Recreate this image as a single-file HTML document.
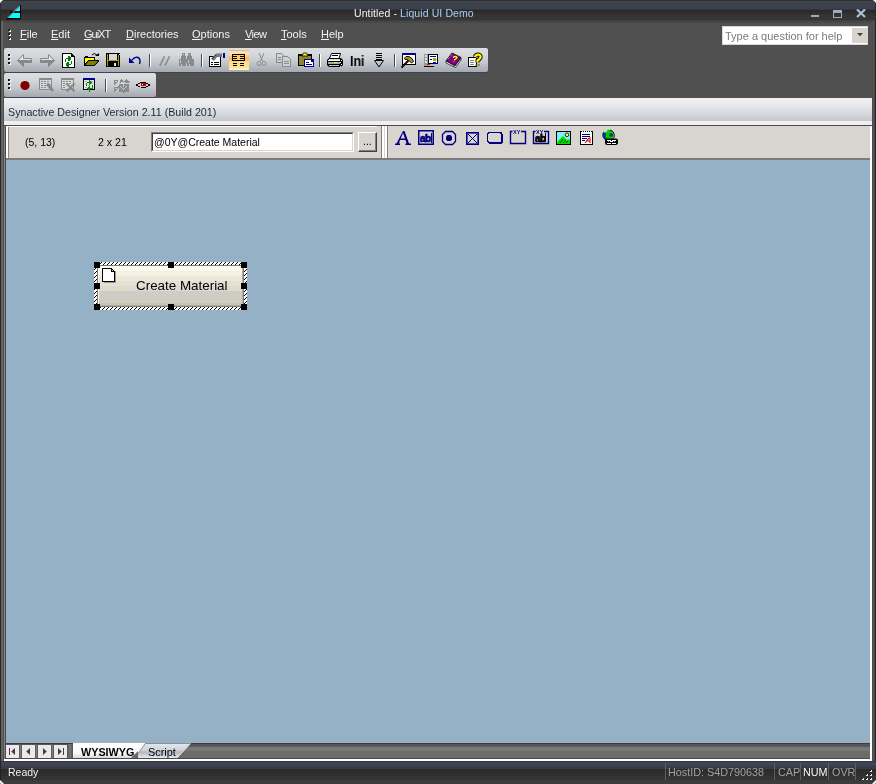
<!DOCTYPE html>
<html><head><meta charset="utf-8">
<style>
*{margin:0;padding:0;box-sizing:border-box}
html,body{width:876px;height:784px;overflow:hidden;background:#fff}
body{position:relative;font-family:"Liberation Sans",sans-serif;font-size:11px;line-height:12px}
.a{position:absolute}
.t{position:absolute;white-space:nowrap;line-height:12px;will-change:transform}
#win{left:0;top:0;width:876px;height:784px;background:#505050;border-radius:5px 5px 2px 2px;overflow:hidden}
#title{left:0;top:0;width:876px;height:23px;background:linear-gradient(#2e2e2e 0,#2e2e2e 1px,#404450 1px,#404450 2px,#3e424a 2px,#3e424a 4px,#3a414d 4px,#3a414d 9px,#343840 9px,#343840 10px,#262a2a 10px,#2a2a2a 12px,#302c2c 12px,#302e2e 14px,#333 14px,#363636 20px,#3c3e3c 20px,#3c3e3c 21px,#484848 21px,#464646 23px)}
#lframe{left:0;top:21px;width:4px;height:763px;background:linear-gradient(90deg,#262826 0,#262826 1px,#5a5e5a 1px,#6a6c6a 3px,#505050 3px)}
#rframe{left:872px;top:21px;width:4px;height:763px;background:linear-gradient(90deg,#4a4a4a 0,#4a4a4a 1px,#5a5a5a 1px,#5a5a5a 2px,#2a2a2a 3px)}
.menu{top:28px;color:#f2f2f2;font-size:11px}
.menu u{text-decoration:underline;text-decoration-thickness:1px;text-underline-offset:1px}
#help{left:722px;top:26px;width:146px;height:19px;background:#fff;border:1px solid #d8d8d8}
#helpb{left:129px;top:1px;width:15px;height:15px;background:#d8d4cc}
.tb{position:absolute;border-radius:2px;box-shadow:0 1px 0 #3c4450;background:linear-gradient(#dcdfe2 0,#d6d9dc 25%,#c4c7cc 60%,#a4a8b0 100%)}
#synbar{left:4px;top:98px;width:868px;height:27px;background:linear-gradient(#f2eef2 0,#f0eef0 3px,#e4e6ea 8px,#d8dce0 14px,#c4c8cc 23px,#f0eef0 23px,#f0eef0 27px)}
#mdi{left:4px;top:125px;width:868px;height:636px;background:#4a4a4a}
#prop{left:6px;top:126px;width:864px;height:33px;background:#d8d5d0;border-left:2px solid #fff;border-top:1px solid #fff}
#canvas{left:6px;top:160px;width:864px;height:583px;background:#94b1c6}
#tabbar{left:6px;top:743px;width:864px;height:16px;background:linear-gradient(#3c3c3c 0,#3c3c3c 1px,#545454 1px,#5c5c5c 4px,#747474 4px,#7a7a7a 6px,#767676 8px,#6c6c6a 8px,#6c6c6a 15px,#4a4a4a 15px)}
#status{left:0;top:761px;width:876px;height:23px;background:linear-gradient(#34363c 0,#34363c 1px,#404454 1px,#3e4250 5px,#383c48 5px,#383c48 8px,#282c2c 8px,#2a2c2c 10px,#302c2c 10px,#303030 15px,#343434 15px,#343434 19px,#3c3c3c 19px)}
.nav{position:absolute;top:745px;width:13px;height:13px;background:#ece8ec}
.sep{position:absolute;width:2px;background:linear-gradient(90deg,#3c4250 0,#3c4250 1px,#fff 1px)}
</style></head><body>
<div id="win" class="a">
 <div id="title" class="a"></div>
 <div class="t" style="left:354px;top:7px;font-size:10.5px;letter-spacing:0.1px;color:#f4f4f4">Untitled - <span style="color:#a8ccf8">Liquid UI Demo</span></div>
<svg class="a" style="left:0;top:0" width="24" height="22" shape-rendering="crispEdges">
 <path d="M6.5 18.5L19.5 5.5V19.5H6.5Z" fill="#000" shape-rendering="auto"/>
 <path d="M8 18L20 6V18Z" fill="#00ffff" shape-rendering="auto"/>
 <rect x="10" y="11" width="10" height="2" fill="#100808"/>
 <rect x="20" y="5" width="1" height="14" fill="#000"/>
 <rect x="7" y="18" width="14" height="1" fill="#000"/>
 <path d="M7.8 17.8L19.6 5.8" stroke="#fff" stroke-width="0.9" stroke-dasharray="1.2 0.4" shape-rendering="auto"/>
</svg>
 <div class="a" style="left:0;top:3px;width:1px;height:19px;background:#2a2c2a"></div>
 <div class="a" style="left:875px;top:3px;width:1px;height:19px;background:#2a2c2a"></div>
 <div id="lframe" class="a"></div>
 <div id="rframe" class="a"></div>
 <!-- window buttons -->
 <div class="a" style="left:811px;top:15px;width:8px;height:2px;background:#a0acbc"></div>
 <div class="a" style="left:833px;top:10px;width:9px;height:8px;border:1.5px solid #a0acbc;border-top-width:3px"></div>
 <svg class="a" style="left:856px;top:9px" width="10" height="9"><path d="M1 0.5L9 8M9 0.5L1 8" stroke="#b0c0d0" stroke-width="2.2"/></svg>
 <!-- menu -->
 <div class="a" style="left:8px;top:29px;width:2px;height:2px;background:#1c2430;box-shadow:1px 1px 0 #fff"></div>
 <div class="a" style="left:8px;top:33px;width:2px;height:2px;background:#1c2430;box-shadow:1px 1px 0 #fff"></div>
 <div class="a" style="left:8px;top:37px;width:2px;height:2px;background:#1c2430;box-shadow:1px 1px 0 #fff"></div>
 <div class="t menu" style="left:20px"><u>F</u>ile</div>
 <div class="t menu" style="left:51px"><u>E</u>dit</div>
 <div class="t menu" style="left:84px;letter-spacing:-1px"><u>G</u>uiXT</div>
 <div class="t menu" style="left:126px"><u>D</u>irectories</div>
 <div class="t menu" style="left:192px"><u>O</u>ptions</div>
 <div class="t menu" style="left:245px;letter-spacing:-0.6px"><u>V</u>iew</div>
 <div class="t menu" style="left:281px"><u>T</u>ools</div>
 <div class="t menu" style="left:321px"><u>H</u>elp</div>
 <div id="help" class="a"><div id="helpb" class="a"></div></div>
 <div class="t" style="left:725px;top:30px;color:#7a7a7a">Type a question for help</div>
 <svg class="a" style="left:857px;top:33px" width="6" height="4"><path d="M0 0H6L3 3.2Z" fill="#404040"/></svg>
 <!-- toolbars -->
 <div class="tb" style="left:4px;top:48px;width:484px;height:24px"></div>
 <div class="tb" style="left:4px;top:73px;width:152px;height:24px"></div>
<svg class="a" style="left:0;top:0" width="876" height="200" shape-rendering="crispEdges">
 <!-- grips -->
 <g fill="#fff"><rect x="9" y="55" width="2" height="2"/><rect x="9" y="59" width="2" height="2"/><rect x="9" y="63" width="2" height="2"/>
 <rect x="9" y="80" width="2" height="2"/><rect x="9" y="84" width="2" height="2"/><rect x="9" y="88" width="2" height="2"/></g>
 <g fill="#101820"><rect x="8" y="54" width="2" height="2"/><rect x="8" y="58" width="2" height="2"/><rect x="8" y="62" width="2" height="2"/>
 <rect x="8" y="79" width="2" height="2"/><rect x="8" y="83" width="2" height="2"/><rect x="8" y="87" width="2" height="2"/></g>
 <!-- back / fwd arrows -->
 <g shape-rendering="auto">
 <path d="M17.5 60.5L23.5 54.5V58.5H31.5V62.5H23.5V66.5Z" fill="#e4e4e6" stroke="#888" stroke-width="1"/>
 <path d="M17.5 60.5H31.5V62.5H23.5V66.5Z" fill="#888" stroke="#888" stroke-width="1"/>
 <path d="M54.5 60.5L48.5 54.5V58.5H40.5V62.5H48.5V66.5Z" fill="#e4e4e6" stroke="#888" stroke-width="1"/>
 <path d="M54.5 60.5H40.5V62.5H48.5V66.5Z" fill="#888" stroke="#888" stroke-width="1"/>
 </g>
 <!-- new/refresh doc -->
 <path d="M62 53H71L75 57V68H62Z" fill="#000"/>
 <path d="M63 54H71V57H74V67H63Z" fill="#fff"/>
 <g fill="#008000"><rect x="66" y="58" width="3" height="1"/><rect x="68" y="56" width="2" height="5"/><rect x="70" y="57" width="1" height="3"/><rect x="65" y="59" width="1" height="3"/>
 <rect x="71" y="61" width="1" height="3"/><rect x="68" y="64" width="3" height="1"/><rect x="67" y="62" width="2" height="5"/><rect x="66" y="63" width="1" height="3"/></g>
 <!-- open folder -->
 <path d="M84 57H85V56H88V57H95V60H99V61L95 66H84Z" fill="#000"/>
 <path d="M85 58H94V60H88L85 64Z" fill="#ffff00"/>
 <path d="M88.5 61H98L94.5 65H85.5Z" fill="#808000" shape-rendering="auto"/>
 <path d="M92 55Q94 52 97 55" fill="none" stroke="#000" stroke-width="1" shape-rendering="auto"/>
 <path d="M95 56H99V53Z" fill="#000" shape-rendering="auto"/>
 <!-- floppy -->
 <rect x="106" y="53" width="14" height="14" fill="#000"/>
 <rect x="107" y="54" width="1" height="12" fill="#a8a000"/><rect x="118" y="55" width="1" height="11" fill="#a8a000"/>
 <rect x="108" y="60" width="10" height="1" fill="#a8a000"/>
 <rect x="109" y="54" width="8" height="6" fill="#d8d8d8"/>
 <rect x="114" y="63" width="2" height="3" fill="#e0e0e0"/>
 <rect x="119" y="54" width="1" height="1" fill="#fff"/>
 <!-- undo -->
 <path d="M129 57.5V63H134.5Z" fill="#000090" shape-rendering="auto"/>
 <path d="M132 60Q135 56.5 138 57.5Q141 59 139.5 64" fill="none" stroke="#000090" stroke-width="1.4" shape-rendering="auto"/>
 <!-- separators -->
 <g fill="#404858"><rect x="149" y="54" width="1" height="13"/><rect x="201" y="54" width="1" height="13"/><rect x="319" y="54" width="1" height="13"/><rect x="394" y="54" width="1" height="13"/><rect x="105" y="79" width="1" height="13"/></g>
 <g fill="#fff"><rect x="150" y="54" width="1" height="13"/><rect x="202" y="54" width="1" height="13"/><rect x="320" y="54" width="1" height="13"/><rect x="395" y="54" width="1" height="13"/><rect x="106" y="79" width="1" height="13"/></g>
 <!-- // -->
 <path d="M160 65.5L164.5 56.5M165 65.5L169.5 56.5" stroke="#868686" stroke-width="2" stroke-dasharray="1.6 0.5" shape-rendering="auto"/>
 <!-- binoculars -->
 <g fill="#8a8a8a"><rect x="182" y="53" width="3" height="3"/><rect x="188" y="53" width="3" height="3"/>
 <rect x="181" y="56" width="5" height="3"/><rect x="187" y="56" width="5" height="3"/>
 <rect x="179" y="59" width="7" height="7"/><rect x="187" y="59" width="7" height="7"/><rect x="185" y="59" width="3" height="4"/></g>
 <g fill="#c8c8cc"><rect x="180" y="60" width="1" height="3"/><rect x="188" y="60" width="1" height="3"/><rect x="183" y="54" width="1" height="1"/><rect x="189" y="54" width="1" height="1"/><rect x="181" y="64" width="1" height="2"/><rect x="189" y="64" width="1" height="2"/></g>
 <!-- form icon -->
 <rect x="209" y="56" width="12" height="11" fill="#000"/>
 <rect x="210" y="57" width="10" height="9" fill="#fff"/>
 <g fill="#000"><rect x="211" y="62" width="2" height="1"/><rect x="214" y="62" width="5" height="1"/><rect x="211" y="64" width="2" height="1"/><rect x="214" y="64" width="5" height="1"/></g>
 <path d="M211 59L216 53.5H222V57H217L214 61Z" fill="#777" shape-rendering="auto"/>
 <path d="M212 59L216 55" stroke="#000" stroke-width="1" stroke-dasharray="1 1" shape-rendering="auto"/>
 <rect x="223" y="53" width="2" height="5" fill="#000090"/>
 <!-- highlighted button -->
 <rect x="229" y="50" width="20" height="20" fill="url(#hl)"/>
 <rect x="229" y="50" width="20" height="1" fill="#e0b890"/>
 <rect x="229" y="69" width="20" height="1" fill="#f4f4f8"/>
 <rect x="232" y="54" width="13" height="7" fill="#000"/>
 <rect x="233" y="55" width="11" height="5" fill="#ffc860"/>
 <g fill="#000"><rect x="233" y="56" width="4" height="1"/><rect x="240" y="56" width="4" height="1"/><rect x="233" y="58" width="4" height="1"/><rect x="240" y="58" width="4" height="1"/>
 <rect x="233" y="63" width="4" height="1"/><rect x="240" y="63" width="4" height="1"/><rect x="233" y="65" width="4" height="1"/><rect x="240" y="65" width="4" height="1"/></g>
 <defs><linearGradient id="hl" x1="0" y1="0" x2="0" y2="1"><stop offset="0" stop-color="#fbd8a8"/><stop offset="0.2" stop-color="#fde0b4"/><stop offset="0.42" stop-color="#ffb448"/><stop offset="0.6" stop-color="#ffd890"/><stop offset="1" stop-color="#ffec88"/></linearGradient></defs>
 <!-- scissors -->
 <g fill="none" stroke="#8a8a8a" stroke-width="1" shape-rendering="auto">
 <path d="M259 53L262.5 61M264 53L260.5 61"/><circle cx="259" cy="63.5" r="2"/><circle cx="264" cy="63.5" r="2"/></g>
 <!-- copy -->
 <g fill="none" stroke="#8a8a8a" stroke-width="1">
 <path d="M276.5 53.5H281.5L283.5 55.5V62.5H276.5Z"/><path d="M282.5 56.5H287.5L290.5 59.5V66.5H282.5Z" fill="#d0d2d6"/></g>
 <g fill="#8a8a8a"><rect x="278" y="57" width="3" height="1"/><rect x="278" y="59" width="3" height="1"/><rect x="284" y="61" width="5" height="1"/><rect x="284" y="63" width="5" height="1"/></g>
 <!-- paste -->
 <rect x="298" y="54" width="14" height="12" fill="#000"/>
 <rect x="299" y="56" width="12" height="9" fill="#8c8430"/>
 <path d="M302 56L303.5 53H306.5L308 56Z" fill="#ffff00" stroke="#000" stroke-width="0.8" shape-rendering="auto"/>
 <rect x="304" y="59" width="10" height="8" fill="#000090"/>
 <rect x="305" y="60" width="8" height="6" fill="#fff"/>
 <rect x="306" y="62" width="3" height="1" fill="#000090"/><rect x="306" y="64" width="6" height="1" fill="#000090"/><rect x="311" y="60" width="2" height="2" fill="#000090"/>
 <!-- printer -->
 <path d="M329.5 58.5L331.5 53.5H340.5L339 58.5" fill="#fff" stroke="#000" stroke-width="1" shape-rendering="auto"/>
 <rect x="332" y="55" width="6" height="1" fill="#000"/>
 <path d="M329 58H341L343 60V65L341 67H329L327 65V60Z" fill="#000" shape-rendering="auto"/>
 <rect x="329" y="59" width="11" height="1" fill="#d8d8d8"/>
 <rect x="328" y="60" width="12" height="1" fill="#fff"/>
 <rect x="328" y="62" width="12" height="2" fill="#a8a8a8"/>
 <rect x="334" y="62" width="3" height="1" fill="#ffff00"/>
 <rect x="329" y="65" width="10" height="1" fill="#c8c8c8"/>
 <g fill="#fff"><rect x="341" y="60" width="1" height="1"/><rect x="340" y="62" width="1" height="1"/><rect x="341" y="64" width="1" height="1"/><rect x="340" y="66" width="1" height="1"/></g>
 <!-- down arrow -->
 <g fill="#000"><rect x="376" y="53" width="6" height="1"/><rect x="376" y="55" width="6" height="1"/><rect x="376" y="57" width="6" height="1"/><rect x="376" y="59" width="6" height="1"/></g>
 <path d="M374.5 60.5H383.5L379 67Z" fill="none" stroke="#000" stroke-width="1" shape-rendering="auto"/>
 <!-- hammer window -->
 <rect x="402" y="53" width="14" height="12" fill="#000"/>
 <rect x="402" y="53" width="14" height="2" fill="#000090"/>
 <rect x="403" y="55" width="12" height="9" fill="#fff"/>
 <path d="M404.5 58L406 56.5H409L412 58.5L413.5 61.5L411.5 63L409.5 61L407 59.5L405 59.5Z" fill="#a09818" stroke="#000" stroke-width="0.9" shape-rendering="auto"/>
 <path d="M408.5 60.5L401.5 67.5" stroke="#000" stroke-width="2" shape-rendering="auto"/>
 <path d="M408.5 60.5L401.5 67.5" stroke="#b00000" stroke-width="0.7" stroke-dasharray="1 1" shape-rendering="auto"/>
 <!-- cert -->
 <rect x="424" y="54" width="4" height="12" fill="#9a9a9a"/>
 <rect x="425" y="55" width="2" height="2" fill="#e0e0e0"/><rect x="425" y="58" width="2" height="2" fill="#e0e0e0"/><rect x="425" y="61" width="2" height="2" fill="#e0e0e0"/>
 <rect x="424" y="66" width="10" height="1" fill="#000"/>
 <rect x="427" y="64" width="3" height="1" fill="#ff0000"/>
 <rect x="428" y="54" width="10" height="10" fill="#000"/>
 <rect x="429" y="55" width="8" height="8" fill="#fff"/>
 <rect x="430" y="56" width="6" height="1" fill="#000090"/><rect x="430" y="59" width="2" height="1" fill="#000090"/>
 <circle cx="434.5" cy="59.5" r="1.8" fill="#a09818" shape-rendering="auto"/>
 <rect x="433" y="62" width="3" height="2" fill="#0000c0"/>
 <!-- purple book -->
 <path d="M446 61L452 53L461 57.5L455 66Z" fill="#800080" stroke="#000" stroke-width="0.8" shape-rendering="auto"/>
 <path d="M455 66L461 58V60L455.5 67.5L446 63V61Z" fill="#fff" stroke="#000" stroke-width="0.7" shape-rendering="auto"/>
 <path d="M453 57.5Q455.5 55.5 457 57.5Q456 59.5 454 60M453.5 61.5V62" fill="none" stroke="#ffff00" stroke-width="1.3" shape-rendering="auto"/>
 <path d="M448 59L452.5 54" stroke="#e8d0e8" stroke-width="0.8" stroke-dasharray="1 1" shape-rendering="auto"/>
 <!-- doc ? -->
 <path d="M468 57H475L477 59V67H468Z" fill="#000"/>
 <rect x="469" y="58" width="7" height="8" fill="#fff"/>
 <g fill="#888"><rect x="470" y="60" width="4" height="1"/><rect x="470" y="62" width="4" height="1"/><rect x="470" y="64" width="4" height="1"/></g>
 <path d="M475 57Q475.5 54.5 478.5 54.5Q481 55 480.5 57.5Q479.5 59.5 477.5 60.5V62.5M477.5 64.5V65.5" fill="none" stroke="#000" stroke-width="4" shape-rendering="auto"/>
 <path d="M475 57Q475.5 54.5 478.5 54.5Q481 55 480.5 57.5Q479.5 59.5 477.5 60.5V62.5M477.5 64.5V65.5" fill="none" stroke="#ffff00" stroke-width="2.2" shape-rendering="auto"/>
 <!-- toolbar 2 -->
 <circle cx="25" cy="85.5" r="4.6" fill="#800000" shape-rendering="auto"/>
 <g id="grid1">
 <rect x="39" y="78" width="13" height="12" fill="#8a8a8a"/>
 <rect x="40" y="80" width="11" height="9" fill="#d6d8dc"/>
 <g fill="#8a8a8a"><rect x="41" y="81" width="2" height="1"/><rect x="44" y="81" width="2" height="1"/><rect x="47" y="81" width="2" height="1"/>
 <rect x="41" y="83" width="2" height="1"/><rect x="44" y="83" width="2" height="1"/><rect x="47" y="83" width="2" height="1"/>
 <rect x="41" y="85" width="2" height="1"/><rect x="44" y="85" width="2" height="1"/><rect x="41" y="87" width="2" height="1"/><rect x="44" y="87" width="2" height="1"/></g>
 </g>
 <path d="M46 85L49 83L54 90L52 92Z" fill="#8a8a8a" shape-rendering="auto"/>
 <rect x="61" y="78" width="13" height="12" fill="#8a8a8a"/>
 <rect x="62" y="80" width="11" height="9" fill="#d6d8dc"/>
 <g fill="#8a8a8a"><rect x="63" y="81" width="2" height="1"/><rect x="66" y="81" width="2" height="1"/><rect x="69" y="81" width="2" height="1"/>
 <rect x="63" y="83" width="2" height="1"/><rect x="66" y="83" width="2" height="1"/><rect x="69" y="83" width="2" height="1"/>
 <rect x="63" y="85" width="2" height="1"/><rect x="63" y="87" width="2" height="1"/></g>
 <path d="M66.5 83.5L74.5 91.5M74.5 83.5L66.5 91.5" stroke="#8a8a8a" stroke-width="2.2" shape-rendering="auto"/>
 <!-- sync window -->
 <rect x="83" y="78" width="12" height="12" fill="#000"/>
 <rect x="83" y="78" width="12" height="2" fill="#000090"/>
 <rect x="84" y="80" width="10" height="9" fill="#e4e2e8"/>
 <g fill="#b0b0b8"><rect x="85" y="81" width="2" height="1"/><rect x="91" y="81" width="2" height="1"/><rect x="91" y="83" width="2" height="1"/><rect x="88" y="85" width="2" height="1"/><rect x="85" y="87" width="2" height="1"/></g>
 <g fill="#008800"><rect x="87" y="82" width="2" height="1"/><rect x="89" y="80" width="1" height="5"/><rect x="90" y="81" width="1" height="3"/><rect x="91" y="82" width="1" height="1"/>
 <rect x="86" y="83" width="1" height="3"/><rect x="92" y="85" width="1" height="3"/>
 <rect x="90" y="88" width="3" height="1"/><rect x="89" y="86" width="1" height="6"/><rect x="88" y="87" width="1" height="3"/><rect x="87" y="88" width="1" height="1"/></g>
 <!-- gray gear -->
 <g fill="#8a8a8a">
 <rect x="114" y="80" width="4" height="1"/><rect x="114" y="81" width="1" height="4"/><rect x="117" y="81" width="1" height="1"/><rect x="115" y="82" width="2" height="1"/><rect x="115" y="83" width="1" height="1"/>
 <rect x="114" y="87" width="4" height="1"/><rect x="114" y="88" width="1" height="4"/><rect x="117" y="88" width="1" height="1"/><rect x="115" y="89" width="2" height="1"/><rect x="115" y="90" width="1" height="1"/>
 <rect x="121" y="79" width="1" height="1"/><rect x="126" y="79" width="1" height="1"/><rect x="120" y="80" width="3" height="1"/><rect x="125" y="80" width="3" height="1"/><rect x="120" y="81" width="10" height="1"/><rect x="120" y="82" width="1" height="1"/><rect x="125" y="82" width="4" height="1"/>
 <rect x="119" y="84" width="10" height="8"/><rect x="118" y="86" width="1" height="2"/><rect x="123" y="92" width="2" height="1"/></g>
 <g fill="#c8cad0"><rect x="123" y="84" width="1" height="3"/><rect x="120" y="86" width="1" height="1"/><rect x="121" y="87" width="1" height="1"/><rect x="122" y="88" width="1" height="1"/><rect x="123" y="89" width="1" height="1"/><rect x="124" y="88" width="1" height="1"/><rect x="125" y="87" width="1" height="1"/><rect x="126" y="86" width="1" height="1"/></g>
 <!-- eye -->
 <g fill="#000"><rect x="140" y="82" width="6" height="1"/><rect x="138" y="83" width="2" height="1"/><rect x="146" y="83" width="2" height="1"/>
 <rect x="136" y="84" width="2" height="2"/><rect x="148" y="84" width="2" height="2"/>
 <rect x="138" y="86" width="2" height="1"/><rect x="146" y="86" width="2" height="1"/><rect x="141" y="87" width="5" height="1"/></g>
 <rect x="141" y="83" width="5" height="3" fill="#c00000"/><rect x="142" y="84" width="1" height="1" fill="#fff"/>
</svg>
<div class="t" style="left:350px;top:54px;font-size:14px;line-height:14px;font-weight:bold;color:#000;transform:scaleX(0.88);transform-origin:0 0">Ini</div>
 <div id="synbar" class="a"></div>
 <div class="t" style="left:8px;top:106px;font-size:10.7px;color:#1c2830">Synactive Designer Version 2.11 (Build 201)</div>
 <div id="mdi" class="a"></div>
 <div class="a" style="left:4px;top:126px;width:1px;height:634px;background:#848084"></div>
 <div class="a" style="left:870px;top:126px;width:2px;height:635px;background:#fff"></div>
 <div class="a" style="left:4px;top:759px;width:868px;height:2px;background:#fff"></div>
 <div id="prop" class="a"></div>
 <div class="a" style="left:8px;top:127px;width:1px;height:31px;background:#888"></div>
 <div class="a" style="left:6px;top:158px;width:864px;height:2px;background:#7c7a7c"></div>
 <div class="t" style="left:25px;top:136px;font-size:10.5px;color:#000">(5, 13)</div>
 <div class="t" style="left:98px;top:136px;font-size:10.6px;color:#000">2 x 21</div>
 <div class="a" style="left:151px;top:132px;width:203px;height:20px;background:#fff;border-top:1px solid #808080;border-left:1px solid #808080;border-bottom:1px solid #fff;border-right:1px solid #fff"></div>
 <div class="a" style="left:152px;top:133px;width:201px;height:18px;border-top:1px solid #404040;border-left:1px solid #404040;border-bottom:1px solid #d8d5d0;border-right:1px solid #d8d5d0"></div>
 <div class="t" style="left:154px;top:136px;font-size:10.5px;color:#000">@0Y@Create Material</div>
 <div class="a" style="left:358px;top:132px;width:19px;height:20px;background:#d8d5d0;border-top:1px solid #fff;border-left:1px solid #fff;border-bottom:1px solid #404040;border-right:1px solid #404040;box-shadow:inset -1px -1px 0 #808080"></div>
 <div class="t" style="left:363px;top:135px;font-size:10.5px;color:#000">...</div>
 <div class="a" style="left:377px;top:126px;width:493px;height:1px;background:#d8d5d0"></div>
 <div class="a" style="left:381px;top:126px;width:7px;height:32px;background:linear-gradient(90deg,#808080 0,#808080 1px,#fff 1px,#fff 3px,#d8d5d0 3px,#d8d5d0 4px,#fff 4px,#fff 6px,#808080 6px)"></div>
 <div id="canvas" class="a"></div>
<svg class="a" style="left:0;top:0" width="876" height="160" shape-rendering="crispEdges">
 <!-- A -->
 <path d="M403 131H404.5L409 143.5H411V145H405.5V143.5H406.5L405.5 140H400L399 143.5H400V145H395V143.5H396.5ZM400.7 138.5H405L403 133Z" fill="#000080" fill-rule="evenodd" shape-rendering="auto"/>
 <!-- ab box -->
 <rect x="418" y="130" width="16" height="15" fill="#000080"/>
 <rect x="419.5" y="131.5" width="13" height="12" fill="#d8d5d0" shape-rendering="auto"/>
 <text x="420" y="141.5" font-family="Liberation Sans" font-weight="bold" font-size="10" fill="#000080" stroke="#000080" stroke-width="0.7" letter-spacing="-0.5" shape-rendering="auto">ab</text>
 <rect x="431" y="133" width="1" height="10" fill="#000080"/>
 <!-- radio -->
 <path d="M445.5 131.5H452.5L455.5 134.5V141.5L452.5 144.5H445.5L442.5 141.5V134.5Z" fill="none" stroke="#000080" stroke-width="1.3" shape-rendering="auto"/>
 <path d="M447.5 135H450.5L452 136.5V139.5L450.5 141H447.5L446 139.5V136.5Z" fill="#000080" shape-rendering="auto"/>
 <!-- checkbox -->
 <rect x="466.8" y="132.8" width="11.4" height="11.4" fill="none" stroke="#000080" stroke-width="1.6" shape-rendering="auto"/>
 <path d="M468 134L477 143M477 134L468 143" stroke="#000080" stroke-width="1" shape-rendering="auto"/>
 <!-- button -->
 <path d="M488 132H501L502 133V134H503V142L502 143V144H489L488 143L487 142V133Z" fill="#000080"/>
 <rect x="488" y="133" width="13" height="9" fill="#d8d5d0"/>
 <g fill="#000080"><rect x="488" y="133" width="1" height="1"/><rect x="500" y="133" width="1" height="1"/><rect x="488" y="141" width="1" height="1"/></g>
 <!-- group XY -->
 <path d="M512.5 131.5H510.5V143.5H525.5V131.5H521" fill="none" stroke="#000080" stroke-width="1.4" shape-rendering="auto"/>
 <text x="513" y="134" font-family="Liberation Sans" font-weight="bold" font-size="5.5" fill="#000080" shape-rendering="auto">XY</text>
 <!-- XY ab -->
 <path d="M535.5 131.5H533.5V143.5H548.5V131.5H544" fill="none" stroke="#000080" stroke-width="1.4" shape-rendering="auto"/>
 <text x="536" y="134" font-family="Liberation Sans" font-weight="bold" font-size="5.5" fill="#000080" shape-rendering="auto">XY</text>
 <text x="535" y="141.5" font-family="Liberation Sans" font-weight="bold" font-size="10" fill="#000" stroke="#000" stroke-width="0.7" letter-spacing="-0.5" shape-rendering="auto">ab</text>
 <rect x="545" y="133" width="1" height="9" fill="#000"/>
 <!-- image -->
 <rect x="556" y="131" width="15" height="14" fill="#000"/>
 <rect x="557" y="132" width="13" height="12" fill="#80f0f8"/>
 <path d="M557 144V142L563 136L567 140L569 139L570 140V144Z" fill="#00e000" shape-rendering="auto"/>
 <path d="M560 143L563 139M563 143L566 140M566 143L568 141" stroke="#000" stroke-width="0.7" shape-rendering="auto"/>
 <circle cx="567" cy="134.8" r="1.8" fill="#ffff40" stroke="#000" stroke-width="0.8" shape-rendering="auto"/>
 <!-- notepad -->
 <rect x="580" y="131" width="13" height="14" fill="#000"/>
 <rect x="581" y="132" width="11" height="12" fill="#fff"/>
 <g fill="#fff"><rect x="582" y="131" width="1" height="1"/><rect x="584" y="131" width="1" height="1"/><rect x="586" y="131" width="1" height="1"/><rect x="588" y="131" width="1" height="1"/><rect x="590" y="131" width="1" height="1"/></g>
 <g fill="#000080"><rect x="582" y="134" width="8" height="1"/><rect x="582" y="136" width="8" height="1"/><rect x="582" y="138" width="5" height="1"/><rect x="582" y="140" width="3" height="1"/></g>
 <path d="M585 143L589 138H590L590 143M586.5 141H590" fill="none" stroke="#f00000" stroke-width="1.2" shape-rendering="auto"/>
 <!-- globe -->
 <circle cx="608" cy="135" r="5.6" fill="#00d000" shape-rendering="auto"/>
 <path d="M608 140.6A5.6 5.6 0 0 1 603 132.5L605 132L606 134L605.5 137L607 138.5Z" fill="#0a2a90" shape-rendering="auto"/>
 <path d="M604 131Q606 129.3 608 129.5L606.5 131.5L604.5 133Z" fill="#e8e0e8" shape-rendering="auto"/>
 <path d="M610 133L613 134L612 137L609 136Z" fill="#0a2a90" shape-rendering="auto"/>
 <path d="M610 130A5.6 5.6 0 0 1 612 140" fill="none" stroke="#000" stroke-width="1" shape-rendering="auto"/>
 <rect x="605" y="138.5" width="13" height="6.5" rx="2.2" fill="#000" shape-rendering="auto"/>
 <g fill="#fff"><rect x="607" y="140" width="4" height="1"/><rect x="612" y="140" width="4" height="1"/><rect x="607" y="143" width="4" height="1"/><rect x="612" y="143" width="4" height="1"/><rect x="610" y="141" width="3" height="1"/></g>
 <g fill="#888"><rect x="608" y="141" width="1" height="1"/><rect x="614" y="141" width="1" height="1"/></g>
</svg>
<svg class="a" style="left:0;top:0" width="260" height="320" shape-rendering="crispEdges">
 <defs><pattern id="hatch" x="0" y="0" width="4" height="4" patternUnits="userSpaceOnUse"><rect width="4" height="4" fill="#fff"/><rect x="3" y="0" width="1" height="1" fill="#000"/><rect x="2" y="1" width="1" height="1" fill="#000"/><rect x="1" y="2" width="1" height="1" fill="#000"/><rect x="0" y="3" width="1" height="1" fill="#000"/></pattern></defs>
 <rect x="94" y="262" width="153" height="48" fill="url(#hatch)"/>
 <rect x="97" y="265" width="147" height="42" fill="#7c7a72"/>
</svg>
<div class="a" style="left:98px;top:266px;width:145px;height:40px;background:linear-gradient(#fdfcf0 0,#fdfcf0 5px,#f4f0e4 5px,#f4f0e4 10px,#ece8d8 10px,#ece8d8 15px,#e6e0d4 15px,#e6e0d4 20px,#dedacd 20px,#dedacd 25px,#cdcdc5 25px,#cdcdc5 32px,#d0ccc0 32px,#d0ccc0 37px,#c8c4b4 37px);border-left:1px solid #fffff4;border-right:1px solid #b4b0a8;border-bottom:1px solid #b4b0a8"></div>
<div class="a" style="left:94px;top:262px;width:6px;height:6px;background:#000"></div>
<div class="a" style="left:168px;top:262px;width:6px;height:6px;background:#000"></div>
<div class="a" style="left:241px;top:262px;width:6px;height:6px;background:#000"></div>
<div class="a" style="left:94px;top:283px;width:6px;height:6px;background:#000"></div>
<div class="a" style="left:241px;top:283px;width:6px;height:6px;background:#000"></div>
<div class="a" style="left:94px;top:304px;width:6px;height:6px;background:#000"></div>
<div class="a" style="left:168px;top:304px;width:6px;height:6px;background:#000"></div>
<div class="a" style="left:241px;top:304px;width:6px;height:6px;background:#000"></div>
<svg class="a" style="left:101px;top:267px" width="17" height="18" shape-rendering="crispEdges">
 <path d="M3 4H15V16H3Z" fill="#9a9a96"/>
 <path d="M1 1H10L14 5V15H1Z" fill="#000"/>
 <path d="M2 2H10V5H13V14H2Z" fill="#fff"/>
 <rect x="11" y="3" width="1" height="1" fill="#c0c0c0"/>
</svg>
<div class="t" style="left:136px;top:278px;font-size:13.4px;line-height:15px;color:#000">Create Material</div>
 <!-- tab bar -->
 <div id="tabbar" class="a"></div>
 <div class="nav" style="left:6px"></div>
 <div class="nav" style="left:22px"></div>
 <div class="nav" style="left:38px"></div>
 <div class="nav" style="left:54px"></div>
 <svg class="a" style="left:0;top:740px" width="200" height="22" shape-rendering="crispEdges">
  <defs>
   <linearGradient id="gw" x1="0" y1="0" x2="0" y2="1"><stop offset="0" stop-color="#fff"/><stop offset="0.7" stop-color="#f8f8fa"/><stop offset="1" stop-color="#d4d8e0"/></linearGradient>
   <linearGradient id="gs" x1="0" y1="0" x2="0" y2="1"><stop offset="0" stop-color="#e4e6ec"/><stop offset="0.45" stop-color="#d0d4dc"/><stop offset="0.6" stop-color="#b4b8c0"/><stop offset="1" stop-color="#e8e8ec"/></linearGradient>
   <linearGradient id="gsep" x1="0" y1="0" x2="1" y2="0"><stop offset="0" stop-color="#505050"/><stop offset="0.5" stop-color="#7a7a7a"/><stop offset="1" stop-color="#505050"/></linearGradient>
  </defs>
  <rect x="19" y="5" width="3" height="13" fill="url(#gsep)"/><rect x="35" y="5" width="3" height="13" fill="url(#gsep)"/><rect x="51" y="5" width="3" height="13" fill="url(#gsep)"/><rect x="67" y="4" width="6" height="14" fill="url(#gsep)"/>
  <g fill="#404040">
   <rect x="9" y="8" width="1" height="7"/><path d="M15 8V15L11.2 11.5Z" shape-rendering="auto"/>
   <path d="M30 8V15L26.2 11.5Z" shape-rendering="auto"/>
   <path d="M43 8V15L46.8 11.5Z" shape-rendering="auto"/>
   <path d="M58 8V15L61.8 11.5Z" shape-rendering="auto"/><rect x="63" y="8" width="1" height="7"/>
  </g>
  <path d="M73 3H145.5L138 13.5V18H73Z" fill="url(#gw)" shape-rendering="auto"/>
  <path d="M131 18L138 11V18Z" fill="#686868" shape-rendering="auto"/>
  <path d="M145.5 3.5H190.5L177 18H138V13.5Z" fill="url(#gs)" shape-rendering="auto"/>
  <path d="M138 13.5L145.5 3.5H190.5" fill="none" stroke="#8c9098" stroke-width="0.8" shape-rendering="auto"/>
  <path d="M177 18L190.5 3.5" fill="none" stroke="#f0f0f4" stroke-width="0.8" shape-rendering="auto"/>
 </svg>
 <div class="t" style="left:81px;top:746px;font-weight:bold;font-size:10.8px;color:#000">WYSIWYG</div>
 <div class="t" style="left:148px;top:746px;font-size:10.9px;color:#000">Script</div>
 <!-- status -->
 <div id="status" class="a"></div>
 <div class="a" style="left:0;top:761px;width:1px;height:20px;background:#222"></div>
 <div class="t" style="left:8px;top:766px;font-size:10.5px;color:#f0f0f0">Ready</div>
 <div class="t" style="left:668px;top:766px;font-size:10.8px;color:#a0a0a0">HostID: S4D790638</div>
 <div class="t" style="left:778px;top:766px;font-size:10.8px;color:#a0a0a0">CAP</div>
 <div class="t" style="left:803px;top:766px;font-size:10.8px;color:#f8f8f8">NUM</div>
 <div class="t" style="left:832px;top:766px;font-size:10.8px;color:#a0a0a0">OVR</div>
 <div class="a" style="left:665px;top:763px;width:1px;height:17px;background:#5e5e5e"></div>
 <div class="a" style="left:774px;top:763px;width:1px;height:17px;background:#5e5e5e"></div>
 <div class="a" style="left:800px;top:763px;width:1px;height:17px;background:#5e5e5e"></div>
 <div class="a" style="left:828px;top:763px;width:1px;height:17px;background:#5e5e5e"></div>
 <div class="a" style="left:855px;top:763px;width:1px;height:17px;background:#5e5e5e"></div>
<svg class="a" style="left:858px;top:766px" width="18" height="18" shape-rendering="crispEdges">
 <g fill="#e8e8e8"><rect x="12" y="4" width="2" height="2"/><rect x="8" y="8" width="2" height="2"/><rect x="12" y="8" width="2" height="2"/><rect x="4" y="12" width="2" height="2"/><rect x="8" y="12" width="2" height="2"/><rect x="12" y="12" width="2" height="2"/></g>
 <g fill="#101010"><rect x="12" y="4" width="1" height="1"/><rect x="8" y="8" width="1" height="1"/><rect x="12" y="8" width="1" height="1"/><rect x="4" y="12" width="1" height="1"/><rect x="8" y="12" width="1" height="1"/><rect x="12" y="12" width="1" height="1"/></g>
</svg>
<svg class="a" style="left:0;top:776px" width="876" height="8" shape-rendering="auto">
 <path d="M0 4L4 8H0Z" fill="#fff"/><path d="M876 4L872 8H876Z" fill="#fff"/>
</svg>
</div>
</body></html>
